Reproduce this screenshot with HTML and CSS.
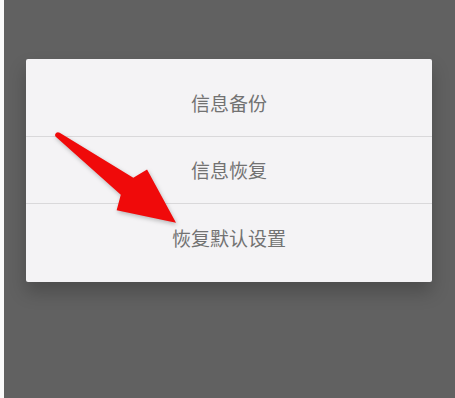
FILE: index.html
```html
<!DOCTYPE html>
<html lang="zh-CN">
<head>
    <meta charset="UTF-8">
    <meta name="viewport" content="width=device-width, initial-scale=1.0">
    <title>恢复默认设置</title>
    <link rel="stylesheet" href="styles.css">
</head>
<body>
    <div class="screen">
        <div class="dialog">
            <div class="menu-item">信息备份</div>
            <div class="menu-item">信息恢复</div>
            <div class="menu-item">恢复默认设置</div>
        </div>

        <!-- red callout arrow pointing at the last item -->
        <svg class="arrow" width="455" height="398" viewBox="0 0 455 398">
            <g transform="translate(58 135) rotate(36.6)">
                <path d="M0,-2.8 C-3.8,-2.8 -3.8,2.8 0,2.8 L86,10.5 L92,25.5 L147,0 L92,-25.5 L86,-10.5 Z" fill="#f00a0a"/>
            </g>
        </svg>
    </div>
</body>
</html>
```

FILE: styles.css
```css
* {
    box-sizing: border-box;
}

body {
    margin: 0;
    background-color: #fafafa;
    font-family: "Noto Sans CJK SC", "Noto Sans", sans-serif;
}

.screen {
    position: relative;
    margin-left: 4px;
    height: 398px;
    padding: 59px 23px 0 22px;
    background-color: #616161;
    overflow: hidden;
}

.dialog {
    background-color: #f4f3f5;
    border-radius: 2px;
    padding: 10px 0 10px;
    box-shadow: 0 10px 18px rgba(0, 0, 0, 0.22);
}

.menu-item {
    height: 67.5px;
    display: flex;
    align-items: center;
    justify-content: center;
    font-size: 19px;
    color: #727272;
    border-bottom: 1px solid #d9d8da;
}

.menu-item:last-child {
    border-bottom: none;
}

.arrow {
    position: absolute;
    left: -4px;
    top: 0;
    filter: drop-shadow(1px 2px 2px rgba(0, 0, 0, 0.25));
}
```
